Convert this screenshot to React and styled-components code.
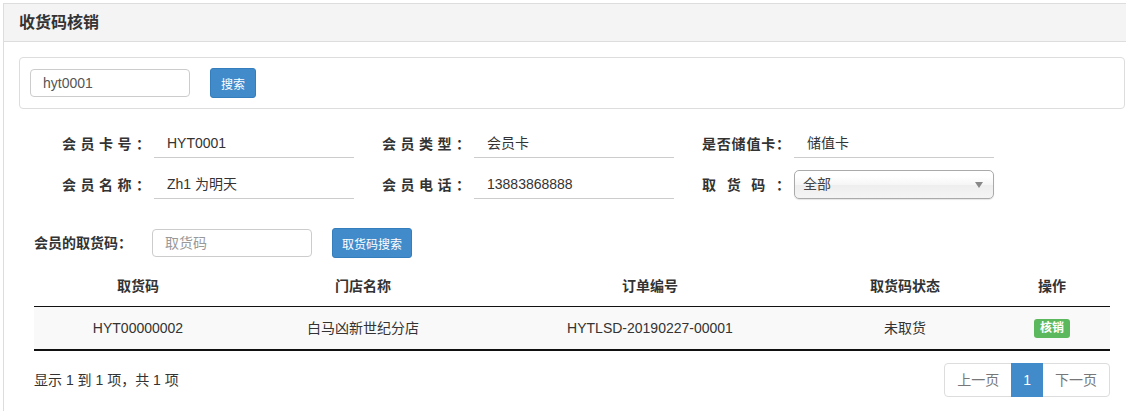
import React from 'react';
import styled, { createGlobalStyle } from 'styled-components';

const GlobalStyle = createGlobalStyle`
body {
  margin: 0;
  font-family: "Liberation Sans", "Noto Sans CJK SC", sans-serif;
  font-size: 14px;
  line-height: 20px;
  color: #333;
  background: #fff;
  overflow: hidden;
}
* { box-sizing: border-box; }
`

const StyledPage = styled.div`
padding: 3px 0 0 3px;
width: 100vw;
overflow: hidden;
`
const StyledPanel = styled.div`
width: 1138px;
border: 1px solid #ddd;
border-bottom: none;
height: 420px;
`
const StyledHeading = styled.div`
height: 38px;
line-height: 37px;
padding: 0 15px;
background-color: #f4f4f4;
border-bottom: 1px solid #ddd;
font-size: 16px;
font-weight: bold;
color: #333;
`
const StyledBody = styled.div`
padding: 15px;
`
const StyledSearchCard = styled.div`
display: flex;
align-items: center;
height: 52px;
padding: 0 10px;
border: 1px solid #ddd;
border-radius: 4px;
`
const StyledInput = styled.input`
width: 160px;
height: 28px;
padding: 0 12px;
border: 1px solid #ccc;
border-radius: 4px;
font-family: inherit;
font-size: 14px;
color: #555;
outline: none;
&::placeholder { color: #999; }
`
const StyledButton = styled.button`
margin-left: 20px;
height: 30px;
padding: 0 ${p => p.$pad || 9}px;
border: 1px solid #357ebd;
border-radius: 3px;
background-color: #428bca;
color: #fff;
font-family: inherit;
font-size: 12px;
`
const StyledContent = styled.div`
padding: 0 15px;
`
const StyledForm = styled.div`
display: grid;
grid-template-columns: repeat(3, 320px);
row-gap: 12px;
margin-top: 20px;
`
const StyledField = styled.div`
display: flex;
align-items: center;
height: 29px;
`
const StyledLabelBox = styled.div`
width: 120px;
padding-right: 4px;
display: flex;
justify-content: flex-end;
`
const StyledLabel = styled.span`
display: inline-block;
width: 88px;
text-align: justify;
text-align-last: justify;
font-weight: bold;
font-size: 14px;
color: #333;
white-space: nowrap;
`
const StyledValue = styled.div`
width: 200px;
height: 29px;
line-height: 28px;
padding-left: 13px;
border-bottom: 1px solid #ccc;
font-size: 14px;
color: #333;
`
const StyledSelect = styled.div`
position: relative;
width: 200px;
height: 29px;
line-height: 27px;
padding-left: 8px;
border: 1px solid #aaa;
border-radius: 5px;
background: linear-gradient(#fff 20%, #f6f6f6 50%, #eee 52%, #f4f4f4 100%);
box-shadow: 0 1px 1px rgba(0, 0, 0, 0.1);
font-size: 14px;
color: #444;
`
const StyledArrow = styled.span`
position: absolute;
right: 10px;
top: 11px;
width: 0;
height: 0;
border-left: 4px solid transparent;
border-right: 4px solid transparent;
border-top: 6px solid #888;
`
const StyledCodeRow = styled.div`
display: flex;
align-items: center;
margin-top: 29px;
`
const StyledCodeLabel = styled.span`
width: 118px;
font-weight: bold;
font-size: 14px;
`
const StyledTable = styled.table`
width: 100%;
margin-top: 8px;
border-collapse: collapse;
table-layout: fixed;
`
const StyledTh = styled.th`
height: 40px;
text-align: center;
font-weight: bold;
font-size: 14px;
border-bottom: 1px solid #111;
`
const StyledTd = styled.td`
height: 44px;
text-align: center;
font-size: 14px;
background-color: #f9f9f9;
border-bottom: 2px solid #111;
`
const StyledBadge = styled.span`
display: inline-block;
height: 19px;
line-height: 19px;
padding: 0 6px;
border-radius: 3px;
background-color: #5cb85c;
color: #fff;
font-size: 12px;
font-weight: bold;
`
const StyledFooter = styled.div`
display: flex;
align-items: center;
justify-content: space-between;
margin-top: 12px;
`
const StyledPager = styled.div`
display: flex;
height: 34px;
border: 1px solid #ddd;
border-radius: 4px;
`
const StyledPageItem = styled.span`
margin: -1px 0;
padding: 0 12px;
line-height: 34px;
font-size: 14px;
color: ${p => p.$active ? '#fff' : '#777'};
background-color: ${p => p.$active ? '#428bca' : 'transparent'};
`

const fields = [
    ['会员卡号：', 'HYT0001'],
    ['会员类型：', '会员卡'],
    ['是否储值卡：', '储值卡'],
    ['会员名称：', 'Zh1 为明天'],
    ['会员电话：', '13883868888'],
]

const columns = [
    ['取货码', 208],
    ['门店名称', 242],
    ['订单编号', 332],
    ['取货码状态', 178],
    ['操作', 116],
]

const App = () => {
    return (
        <StyledPage>
            <GlobalStyle />
            <StyledPanel>
                <StyledHeading>收货码核销</StyledHeading>
                <StyledBody>
                    <StyledSearchCard>
                        <StyledInput defaultValue='hyt0001' />
                        <StyledButton $pad={10}>搜索</StyledButton>
                    </StyledSearchCard>
                    <StyledContent>
                        <StyledForm>
                            {fields.map(([label, value]) => (
                                <StyledField key={label}>
                                    <StyledLabelBox><StyledLabel>{label}</StyledLabel></StyledLabelBox>
                                    <StyledValue>{value}</StyledValue>
                                </StyledField>
                            ))}
                            <StyledField>
                                <StyledLabelBox><StyledLabel>取货码：</StyledLabel></StyledLabelBox>
                                <StyledSelect>
                                    全部
                                    <StyledArrow />
                                </StyledSelect>
                            </StyledField>
                        </StyledForm>
                        <StyledCodeRow>
                            <StyledCodeLabel>会员的取货码：</StyledCodeLabel>
                            <StyledInput placeholder='取货码' />
                            <StyledButton>取货码搜索</StyledButton>
                        </StyledCodeRow>
                        <StyledTable>
                            <colgroup>
                                {columns.map(([name, w]) => <col key={name} style={{ width: w }} />)}
                            </colgroup>
                            <thead>
                                <tr>
                                    {columns.map(([name]) => <StyledTh key={name}>{name}</StyledTh>)}
                                </tr>
                            </thead>
                            <tbody>
                                <tr>
                                    <StyledTd>HYT00000002</StyledTd>
                                    <StyledTd>白马凶新世纪分店</StyledTd>
                                    <StyledTd>HYTLSD-20190227-00001</StyledTd>
                                    <StyledTd>未取货</StyledTd>
                                    <StyledTd><StyledBadge>核销</StyledBadge></StyledTd>
                                </tr>
                            </tbody>
                        </StyledTable>
                        <StyledFooter>
                            <span>显示 1 到 1 项，共 1 项</span>
                            <StyledPager>
                                <StyledPageItem>上一页</StyledPageItem>
                                <StyledPageItem $active>1</StyledPageItem>
                                <StyledPageItem>下一页</StyledPageItem>
                            </StyledPager>
                        </StyledFooter>
                    </StyledContent>
                </StyledBody>
            </StyledPanel>
        </StyledPage>
    )
}
export default App
